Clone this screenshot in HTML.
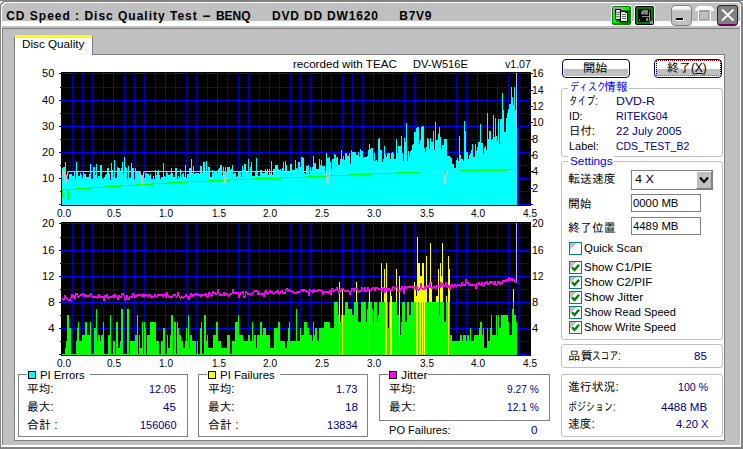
<!DOCTYPE html>
<html lang="ja">
<head>
<meta charset="utf-8">
<title>CD Speed : Disc Quality Test</title>
<style>
html,body{margin:0;padding:0;}
body{width:743px;height:449px;position:relative;overflow:hidden;background:#c0c0c0;
 font-family:"Liberation Sans","IPAGothic","Noto Sans CJK JP",sans-serif;font-size:12px;color:#000;}
.abs{position:absolute;}
.t{position:absolute;white-space:pre;line-height:14px;height:14px;font-size:11.5px;transform-origin:0 0;}
.tb,.tbs{font-weight:bold;font-size:12px;}
.j{font-size:12px;}
.v{color:#000080;}
.b{color:#0000ff;}
.box{position:absolute;box-sizing:border-box;}
.grp{position:absolute;box-sizing:border-box;border:1px solid #808080;}
.grpr{position:absolute;box-sizing:border-box;border:1px solid #c0c0c0;border-radius:3px;}
.gt{position:absolute;background:#fff;height:12px;}
.sq{position:absolute;width:6px;height:6px;border:1px solid #000;}
.edit{position:absolute;box-sizing:border-box;border:1px solid #808080;background:#fff;}
.cb{position:absolute;box-sizing:border-box;width:13px;height:13px;border:1px solid #008080;background:linear-gradient(135deg,#c0c0c0 0,#c0c0c0 28%,#fff 28%);}
.btn{position:absolute;box-sizing:border-box;border:1px solid #000080;border-radius:4px;background:linear-gradient(#fff 0,#fff 9px,#c0c0c0 9px,#c0c0c0 16px,#fff 16px);box-shadow:inset 0 0 0 1px #fff;}
</style>
</head>
<body>
<!-- window frame -->
<div class="box" style="left:0;top:0;width:743px;height:2px;background:#808080"></div>
<div class="box" style="left:0;top:0;width:1px;height:449px;background:#808080"></div>
<div class="box" style="left:1px;top:2px;width:740px;height:1px;background:#fff"></div>
<div class="box" style="left:1px;top:2px;width:1px;height:444px;background:#fff"></div>
<div class="box" style="left:740px;top:2px;width:1px;height:445px;background:#fff"></div>
<div class="box" style="left:741px;top:0;width:2px;height:449px;background:#808080"></div>
<div class="box" style="left:1px;top:445px;width:740px;height:2px;background:#fff"></div>
<div class="box" style="left:0;top:447px;width:743px;height:2px;background:#808080"></div>
<svg class="abs" style="left:0;top:0" width="7" height="7" viewBox="0 0 7 7"><polygon points="0,1 4,1 0,5" fill="#e8e8e8"/><path d="M4.5,1 L0.5,5" stroke="#808080" stroke-width="1.4"/><path d="M5.5,2.2 L1.8,6" stroke="#fff" stroke-width="1.2"/></svg>
<svg class="abs" style="left:736px;top:0" width="7" height="7" viewBox="0 0 7 7"><polygon points="7,1 3,1 7,5" fill="#c8c8c8"/><path d="M2.5,1 L6.5,5" stroke="#808080" stroke-width="1.4"/><path d="M1.5,2.2 L5.2,6" stroke="#fff" stroke-width="1.2"/></svg>
<!-- title bar -->
<div class="box" style="left:2px;top:21px;width:738px;height:5px;background:#fff"></div>
<div class="box" style="left:2px;top:28px;width:1px;height:417px;background:#808080"></div>
<div class="box" style="left:2px;top:28px;width:738px;height:1px;background:#808080"></div>
<!-- title icons -->
<svg class="abs" style="left:611px;top:5px" width="21" height="21" viewBox="-1 -1 21 21" shape-rendering="crispEdges">
 <rect x="-1" y="-1" width="21" height="21" rx="3" fill="#fff" shape-rendering="auto"/>
 <rect x="0" y="0" width="19" height="19" rx="2" fill="#008000" shape-rendering="auto"/>
 <polygon points="0.5,2 2,0.5 17,0.5 17,4 10,4 3.5,4 3.5,15.5 8,17 0.5,16.5" fill="#00ff00"/>
 <polygon points="1,1 11.5,1 10.5,3.5 3.5,3.5 3.5,8 1,8" fill="#a8a0a8"/>
 <rect x="3" y="3" width="6" height="11" fill="#000"/>
 <rect x="4" y="4" width="4" height="9" fill="#d8d8d8"/>
 <rect x="4" y="6" width="4" height="1" fill="#808080"/><rect x="4" y="8" width="4" height="1" fill="#808080"/><rect x="4" y="10" width="4" height="1" fill="#808080"/>
 <rect x="8" y="5" width="8" height="11" fill="#000"/>
 <rect x="9" y="6" width="6" height="9" fill="#e8e8e8"/>
 <rect x="13" y="5" width="3" height="2" fill="#000"/>
 <rect x="10" y="8" width="4" height="1" fill="#707070"/><rect x="10" y="10" width="4" height="1" fill="#707070"/><rect x="10" y="12" width="3" height="1" fill="#707070"/>
 <rect x="13" y="12" width="1" height="1" fill="#c000c0"/>
</svg>
<svg class="abs" style="left:634px;top:5px" width="21" height="21" viewBox="-1 -1 21 21" shape-rendering="crispEdges">
 <rect x="-1" y="-1" width="21" height="21" rx="3" fill="#fff" shape-rendering="auto"/>
 <rect x="0" y="0" width="19" height="19" rx="2" fill="#000" shape-rendering="auto"/>
 <rect x="1" y="1" width="17" height="17" rx="1" fill="#008000" shape-rendering="auto"/>
 <rect x="3" y="3" width="13" height="13" fill="#000"/>
 <polygon points="8,4 13,4 13,8.5 6,8.5 6,6" fill="#808080" shape-rendering="auto"/>
 <rect x="7" y="10" width="8" height="1" fill="#909090"/>
 <rect x="14" y="6" width="1" height="9" fill="#909090"/>
 <rect x="11" y="12" width="2" height="3" fill="#808080"/>
 <rect x="4" y="13" width="1" height="2" fill="#707070"/>
 <rect x="15" y="15" width="3" height="3" fill="#909090"/>
 <rect x="14" y="4" width="1" height="1" fill="#00a000"/>
</svg>
<!-- min / max / close -->
<div class="box" style="left:671px;top:5px;width:21px;height:21px;border:1px solid #808080;border-radius:4px;background:linear-gradient(#fff 0,#f0f0f0 3px,#c0c0c0 5px,#c0c0c0 100%);"></div>
<div class="box" style="left:676px;top:18px;width:8px;height:3px;background:#000;border-bottom:1px solid #fff;border-right:1px solid #fff"></div>
<div class="box" style="left:695px;top:6px;width:19px;height:5px;background:#fff;border-radius:5px 5px 0 0;"></div>
<div class="box" style="left:698px;top:9px;width:13px;height:13px;border:1px solid #fff;background:#c0c0c0;"></div>
<div class="box" style="left:699px;top:10px;width:10px;height:10px;border:1px solid #a0a0a0;border-top:2px solid #a0a0a0;"></div>
<div class="box" style="left:717px;top:5px;width:21px;height:21px;border:1px solid #800000;border-bottom:2px solid #700060;border-radius:4px;background:#808080;"></div>
<svg class="abs" style="left:717px;top:5px" width="21" height="21" viewBox="0 0 21 21"><path d="M5,4.5 L16.5,15.5 M16.5,4.5 L5,15.5" stroke="#fff" stroke-width="1.8" fill="none"/></svg>

<!-- tab page -->
<div class="box" style="left:14px;top:54px;width:711px;height:387px;background:#fff;border-left:1px solid #808080;border-top:1px solid #808080;border-right:1px solid #808080;border-bottom:1px solid #808080;"></div>
<div class="box" style="left:14px;top:35px;width:79px;height:20px;background:#fff;border-left:1px solid #808080;border-right:1px solid #808080;border-top:3px solid #ffff00;border-radius:2px 2px 0 0;"></div>

<svg class="abs" style="left:0;top:0" width="743" height="449" viewBox="0 0 743 449" shape-rendering="crispEdges"><rect x="61" y="72" width="470" height="134" fill="#000"/><rect x="72" y="73" width="1" height="133" fill="#0000b8"/><rect x="82" y="73" width="1" height="133" fill="#0000b8"/><rect x="92" y="73" width="1" height="133" fill="#0000b8"/><rect x="103" y="73" width="1" height="133" fill="#0000b8"/><rect x="113" y="73" width="1" height="133" fill="#0000ff"/><rect x="124" y="73" width="1" height="133" fill="#0000b8"/><rect x="134" y="73" width="1" height="133" fill="#0000b8"/><rect x="144" y="73" width="1" height="133" fill="#0000b8"/><rect x="155" y="73" width="1" height="133" fill="#0000b8"/><rect x="165" y="73" width="1" height="133" fill="#0000ff"/><rect x="175" y="73" width="1" height="133" fill="#0000b8"/><rect x="186" y="73" width="1" height="133" fill="#0000b8"/><rect x="196" y="73" width="1" height="133" fill="#0000b8"/><rect x="207" y="73" width="1" height="133" fill="#0000b8"/><rect x="217" y="73" width="1" height="133" fill="#0000ff"/><rect x="227" y="73" width="1" height="133" fill="#0000b8"/><rect x="238" y="73" width="1" height="133" fill="#0000b8"/><rect x="248" y="73" width="1" height="133" fill="#0000b8"/><rect x="259" y="73" width="1" height="133" fill="#0000b8"/><rect x="269" y="73" width="1" height="133" fill="#0000ff"/><rect x="279" y="73" width="1" height="133" fill="#0000b8"/><rect x="290" y="73" width="1" height="133" fill="#0000b8"/><rect x="300" y="73" width="1" height="133" fill="#0000b8"/><rect x="310" y="73" width="1" height="133" fill="#0000b8"/><rect x="321" y="73" width="1" height="133" fill="#0000ff"/><rect x="331" y="73" width="1" height="133" fill="#0000b8"/><rect x="342" y="73" width="1" height="133" fill="#0000b8"/><rect x="352" y="73" width="1" height="133" fill="#0000b8"/><rect x="362" y="73" width="1" height="133" fill="#0000b8"/><rect x="373" y="73" width="1" height="133" fill="#0000ff"/><rect x="383" y="73" width="1" height="133" fill="#0000b8"/><rect x="393" y="73" width="1" height="133" fill="#0000b8"/><rect x="404" y="73" width="1" height="133" fill="#0000b8"/><rect x="414" y="73" width="1" height="133" fill="#0000b8"/><rect x="425" y="73" width="1" height="133" fill="#0000ff"/><rect x="435" y="73" width="1" height="133" fill="#0000b8"/><rect x="445" y="73" width="1" height="133" fill="#0000b8"/><rect x="456" y="73" width="1" height="133" fill="#0000b8"/><rect x="466" y="73" width="1" height="133" fill="#0000b8"/><rect x="477" y="73" width="1" height="133" fill="#0000ff"/><rect x="487" y="73" width="1" height="133" fill="#0000b8"/><rect x="497" y="73" width="1" height="133" fill="#0000b8"/><rect x="508" y="73" width="1" height="133" fill="#0000b8"/><rect x="518" y="73" width="1" height="133" fill="#0000b8"/><rect x="59" y="73" width="474" height="1" fill="#0000ff"/><rect x="60" y="87" width="469" height="1" fill="#0000c8"/><rect x="59" y="100" width="470" height="1" fill="#0000ff"/><rect x="60" y="113" width="469" height="1" fill="#0000c8"/><rect x="59" y="126" width="470" height="1" fill="#0000ff"/><rect x="60" y="139" width="469" height="1" fill="#0000c8"/><rect x="59" y="152" width="470" height="1" fill="#0000ff"/><rect x="60" y="165" width="469" height="1" fill="#0000c8"/><rect x="59" y="178" width="470" height="1" fill="#0000ff"/><rect x="60" y="191" width="469" height="1" fill="#0000c8"/><rect x="59" y="204" width="470" height="1" fill="#0000ff"/><rect x="529" y="204" width="4" height="1" fill="#0000ff"/><rect x="529" y="196" width="2" height="1" fill="#0000ff"/><rect x="529" y="188" width="4" height="1" fill="#0000ff"/><rect x="529" y="180" width="2" height="1" fill="#0000ff"/><rect x="529" y="171" width="4" height="1" fill="#0000ff"/><rect x="529" y="163" width="2" height="1" fill="#0000ff"/><rect x="529" y="155" width="4" height="1" fill="#0000ff"/><rect x="529" y="147" width="2" height="1" fill="#0000ff"/><rect x="529" y="139" width="4" height="1" fill="#0000ff"/><rect x="529" y="131" width="2" height="1" fill="#0000ff"/><rect x="529" y="122" width="4" height="1" fill="#0000ff"/><rect x="529" y="114" width="2" height="1" fill="#0000ff"/><rect x="529" y="106" width="4" height="1" fill="#0000ff"/><rect x="529" y="98" width="2" height="1" fill="#0000ff"/><rect x="529" y="90" width="4" height="1" fill="#0000ff"/><rect x="529" y="82" width="2" height="1" fill="#0000ff"/><path d="M62,205V168h1V167h1V167h1V162h1V175h1V179h1V179h1V174h1V174h1V174h1V176h1V176h1V171h1V179h1V162h1V171h1V176h1V176h1V173h1V175h1V178h1V172h1V174h1V174h1V177h1V177h1V177h1V174h1V164h1V179h1V179h1V167h1V167h1V175h1V164h1V178h1V176h1V176h1V165h1V165h1V178h1V179h1V177h1V175h1V174h1V168h1V168h1V174h1V180h1V163h1V170h1V177h1V160h1V178h1V178h1V167h1V168h1V168h1V171h1V168h1V162h1V174h1V157h1V167h1V168h1V179h1V166h1V178h1V178h1V163h1V168h1V168h1V179h1V168h1V172h1V172h1V171h1V172h1V175h1V175h1V175h1V175h1V178h1V173h1V173h1V174h1V174h1V176h1V174h1V179h1V179h1V176h1V179h1V170h1V175h1V171h1V170h1V175h1V179h1V177h1V177h1V163h1V176h1V177h1V172h1V173h1V175h1V175h1V174h1V168h1V173h1V177h1V177h1V168h1V168h1V179h1V176h1V178h1V169h1V177h1V174h1V173h1V177h1V165h1V178h1V174h1V174h1V168h1V168h1V159h1V173h1V166h1V174h1V173h1V173h1V173h1V173h1V174h1V166h1V166h1V173h1V162h1V162h1V172h1V161h1V172h1V167h1V167h1V177h1V177h1V170h1V173h1V171h1V171h1V171h1V173h1V169h1V168h1V165h1V165h1V175h1V167h1V171h1V167h1V176h1V167h1V167h1V167h1V170h1V169h1V165h1V174h1V173h1V173h1V177h1V176h1V172h1V171h1V171h1V177h1V166h1V170h1V164h1V164h1V171h1V171h1V159h1V173h1V167h1V162h1V176h1V176h1V176h1V172h1V158h1V171h1V176h1V176h1V170h1V170h1V173h1V173h1V173h1V169h1V172h1V169h1V175h1V169h1V173h1V161h1V175h1V169h1V169h1V165h1V165h1V165h1V169h1V170h1V169h1V171h1V168h1V162h1V172h1V161h1V165h1V171h1V171h1V171h1V164h1V164h1V170h1V170h1V170h1V160h1V168h1V169h1V162h1V162h1V167h1V157h1V157h1V158h1V173h1V174h1V166h1V166h1V165h1V174h1V167h1V171h1V167h1V156h1V163h1V163h1V169h1V169h1V169h1V159h1V165h1V160h1V166h1V166h1V166h1V173h1V153h1V158h1V158h1V157h1V162h1V169h1V159h1V159h1V154h1V155h1V158h1V157h1V165h1V165h1V159h1V150h1V159h1V156h1V160h1V153h1V153h1V156h1V156h1V153h1V164h1V150h1V152h1V152h1V152h1V152h1V155h1V155h1V152h1V157h1V149h1V151h1V151h1V158h1V157h1V157h1V157h1V156h1V150h1V144h1V149h1V148h1V148h1V161h1V153h1V161h1V160h1V162h1V139h1V138h1V150h1V150h1V162h1V159h1V146h1V154h1V157h1V153h1V153h1V153h1V159h1V153h1V152h1V153h1V159h1V159h1V139h1V153h1V146h1V146h1V146h1V136h1V153h1V161h1V138h1V142h1V123h1V161h1V151h1V156h1V151h1V150h1V145h1V144h1V132h1V132h1V128h1V127h1V127h1V144h1V140h1V127h1V126h1V126h1V148h1V152h1V147h1V138h1V139h1V149h1V138h1V142h1V142h1V131h1V150h1V122h1V140h1V140h1V134h1V127h1V137h1V149h1V145h1V145h1V139h1V139h1V139h1V156h1V156h1V156h1V157h1V158h1V164h1V164h1V168h1V168h1V160h1V158h1V161h1V136h1V155h1V159h1V159h1V161h1V121h1V131h1V152h1V152h1V159h1V155h1V153h1V150h1V144h1V157h1V157h1V144h1V151h1V147h1V142h1V142h1V124h1V143h1V143h1V154h1V148h1V146h1V150h1V113h1V139h1V131h1V131h1V140h1V139h1V115h1V137h1V118h1V136h1V141h1V119h1V144h1V119h1V119h1V93h1V110h1V132h1V132h1V118h1V113h1V109h1V104h1V104h1V87h1V97h1V105h1V87h1V110h1V126h1V205Z" fill="#00ffff"/><path d="M62,197.5 L63,190.5 L64,189.5 L65,189.5 L66,189.5 L67,189.5 L68,200.5 L69,189.5 L70,189.5 L71,189.5 L72,189.5 L73,189.5 L74,189.5 L75,189.5 L76,189.5 L77,188.5 L78,188.5 L79,188.5 L80,188.5 L81,188.5 L82,188.5 L83,188.5 L84,188.5 L85,188.5 L86,188.5 L87,188.5 L88,188.5 L89,188.5 L90,188.5 L91,187.5 L92,187.5 L93,187.5 L94,187.5 L95,187.5 L96,187.5 L97,187.5 L98,187.5 L99,187.5 L100,187.5 L101,187.5 L102,187.5 L103,187.5 L104,187.5 L105,187.5 L106,186.5 L107,186.5 L108,186.5 L109,186.5 L110,186.5 L111,186.5 L112,186.5 L113,186.5 L114,186.5 L115,186.5 L116,186.5 L117,186.5 L118,186.5 L119,186.5 L120,186.5 L121,185.5 L122,185.5 L123,185.5 L124,185.5 L125,185.5 L126,185.5 L127,185.5 L128,185.5 L129,185.5 L130,185.5 L131,185.5 L132,185.5 L133,185.5 L134,185.5 L135,185.5 L136,185.5 L137,184.5 L138,184.5 L139,184.5 L140,184.5 L141,184.5 L142,184.5 L143,184.5 L144,184.5 L145,184.5 L146,184.5 L147,184.5 L148,184.5 L149,184.5 L150,184.5 L151,184.5 L152,184.5 L153,183.5 L154,183.5 L155,183.5 L156,183.5 L157,183.5 L158,183.5 L159,183.5 L160,183.5 L161,183.5 L162,183.5 L163,183.5 L164,183.5 L165,183.5 L166,183.5 L167,183.5 L168,183.5 L169,182.5 L170,182.5 L171,182.5 L172,182.5 L173,182.5 L174,182.5 L175,182.5 L176,182.5 L177,182.5 L178,182.5 L179,182.5 L180,182.5 L181,182.5 L182,182.5 L183,182.5 L184,182.5 L185,182.5 L186,182.5 L187,181.5 L188,181.5 L189,181.5 L190,181.5 L191,181.5 L192,181.5 L193,181.5 L194,181.5 L195,181.5 L196,181.5 L197,181.5 L198,181.5 L199,181.5 L200,181.5 L201,181.5 L202,181.5 L203,181.5 L204,181.5 L205,181.5 L206,181.5 L207,181.5 L208,180.5 L209,180.5 L210,180.5 L211,180.5 L212,180.5 L213,180.5 L214,180.5 L215,180.5 L216,180.5 L217,180.5 L218,180.5 L219,180.5 L220,180.5 L221,180.5 L222,180.5 L223,180.5 L224,180.5 L225,180.5 L226,180.5 L227,180.5 L228,180.5 L229,180.5 L230,179.5 L231,179.5 L232,179.5 L233,179.5 L234,179.5 L235,179.5 L236,179.5 L237,179.5 L238,179.5 L239,179.5 L240,179.5 L241,179.5 L242,179.5 L243,179.5 L244,179.5 L245,179.5 L246,179.5 L247,179.5 L248,179.5 L249,179.5 L250,179.5 L251,179.5 L252,179.5 L253,179.5 L254,178.5 L255,178.5 L256,178.5 L257,178.5 L258,178.5 L259,178.5 L260,178.5 L261,178.5 L262,178.5 L263,178.5 L264,178.5 L265,178.5 L266,178.5 L267,178.5 L268,178.5 L269,178.5 L270,178.5 L271,178.5 L272,178.5 L273,178.5 L274,178.5 L275,178.5 L276,178.5 L277,178.5 L278,178.5 L279,178.5 L280,178.5 L281,177.5 L282,177.5 L283,177.5 L284,177.5 L285,177.5 L286,177.5 L287,177.5 L288,177.5 L289,177.5 L290,177.5 L291,177.5 L292,177.5 L293,177.5 L294,177.5 L295,177.5 L296,177.5 L297,177.5 L298,177.5 L299,177.5 L300,177.5 L301,177.5 L302,177.5 L303,177.5 L304,177.5 L305,177.5 L306,177.5 L307,176.5 L308,176.5 L309,176.5 L310,176.5 L311,176.5 L312,176.5 L313,176.5 L314,176.5 L315,176.5 L316,176.5 L317,176.5 L318,176.5 L319,176.5 L320,176.5 L321,176.5 L322,176.5 L323,176.5 L324,176.5 L325,176.5 L326,176.5 L327,176.5 L328,175.5 L329,175.5 L330,175.5 L331,175.5 L332,175.5 L333,175.5 L334,175.5 L335,175.5 L336,175.5 L337,175.5 L338,175.5 L339,175.5 L340,175.5 L341,175.5 L342,175.5 L343,175.5 L344,175.5 L345,175.5 L346,175.5 L347,175.5 L348,175.5 L349,175.5 L350,174.5 L351,174.5 L352,174.5 L353,174.5 L354,174.5 L355,174.5 L356,174.5 L357,174.5 L358,174.5 L359,174.5 L360,174.5 L361,174.5 L362,174.5 L363,174.5 L364,174.5 L365,174.5 L366,174.5 L367,174.5 L368,174.5 L369,174.5 L370,174.5 L371,174.5 L372,173.5 L373,173.5 L374,173.5 L375,173.5 L376,173.5 L377,173.5 L378,173.5 L379,173.5 L380,173.5 L381,173.5 L382,173.5 L383,173.5 L384,173.5 L385,173.5 L386,173.5 L387,173.5 L388,173.5 L389,173.5 L390,173.5 L391,173.5 L392,173.5 L393,173.5 L394,173.5 L395,173.5 L396,172.5 L397,172.5 L398,172.5 L399,172.5 L400,172.5 L401,172.5 L402,172.5 L403,172.5 L404,172.5 L405,172.5 L406,172.5 L407,172.5 L408,172.5 L409,172.5 L410,172.5 L411,172.5 L412,172.5 L413,172.5 L414,172.5 L415,172.5 L416,172.5 L417,172.5 L418,172.5 L419,172.5 L420,171.5 L421,171.5 L422,171.5 L423,171.5 L424,171.5 L425,171.5 L426,171.5 L427,171.5 L428,171.5 L429,171.5 L430,171.5 L431,171.5 L432,171.5 L433,171.5 L434,171.5 L435,171.5 L436,171.5 L437,171.5 L438,171.5 L439,171.5 L440,171.5 L441,171.5 L442,171.5 L443,171.5 L444,171.5 L445,171.5 L446,171.5 L447,171.5 L448,171.5 L449,171.5 L450,171.5 L451,171.5 L452,171.5 L453,171.5 L454,171.5 L455,171.5 L456,171.5 L457,171.5 L458,171.5 L459,171.5 L460,171.5 L461,170.5 L462,170.5 L463,170.5 L464,170.5 L465,170.5 L466,170.5 L467,170.5 L468,170.5 L469,170.5 L470,170.5 L471,170.5 L472,170.5 L473,170.5 L474,170.5 L475,170.5 L476,170.5 L477,170.5 L478,170.5 L479,170.5 L480,170.5 L481,170.5 L482,170.5 L483,170.5 L484,170.5 L485,170.5 L486,170.5 L487,170.5 L488,170.5 L489,170.5 L490,170.5 L491,170.5 L492,170.5 L493,170.5 L494,170.5 L495,170.5 L496,170.5 L497,170.5 L498,170.5 L499,170.5 L500,170.5 L501,170.5 L502,170.5 L503,170.5 L504,170.5 L505,170.5 L506,170.5 L507,169.5 L508,169.5 L509,169.5 L510,169.5 L511,169.5 L512,169.5 L513,169.5 L514,169.5 L515,169.5 L516,169.5" fill="none" stroke="#00ff00" stroke-width="1" shape-rendering="crispEdges"/><path d="M62,177 L63,171.5 L64,171.5 L65,180 L66,184 L67,176 L68,171.5 L140,171.5 L141,178 L142,184.5 L143,177 L144,171.5 L223,171.5 L224,178 L225,184.5 L226,177 L227,171.5 L326,171.5 L327,178 L328,184.5 L329,177 L330,171.5 L443,171.5 L444,178 L445,184.5 L446,177 L447,171.5 L513,171.5" fill="none" stroke="#c8c8c8" stroke-width="1.2" shape-rendering="auto"/><rect x="516" y="73" width="1" height="54" fill="#c0c0c0"/><rect x="61" y="222" width="470" height="134" fill="#000"/><rect x="72" y="223" width="1" height="133" fill="#0000b8"/><rect x="82" y="223" width="1" height="133" fill="#0000b8"/><rect x="92" y="223" width="1" height="133" fill="#0000b8"/><rect x="103" y="223" width="1" height="133" fill="#0000b8"/><rect x="113" y="223" width="1" height="133" fill="#0000ff"/><rect x="124" y="223" width="1" height="133" fill="#0000b8"/><rect x="134" y="223" width="1" height="133" fill="#0000b8"/><rect x="144" y="223" width="1" height="133" fill="#0000b8"/><rect x="155" y="223" width="1" height="133" fill="#0000b8"/><rect x="165" y="223" width="1" height="133" fill="#0000ff"/><rect x="175" y="223" width="1" height="133" fill="#0000b8"/><rect x="186" y="223" width="1" height="133" fill="#0000b8"/><rect x="196" y="223" width="1" height="133" fill="#0000b8"/><rect x="207" y="223" width="1" height="133" fill="#0000b8"/><rect x="217" y="223" width="1" height="133" fill="#0000ff"/><rect x="227" y="223" width="1" height="133" fill="#0000b8"/><rect x="238" y="223" width="1" height="133" fill="#0000b8"/><rect x="248" y="223" width="1" height="133" fill="#0000b8"/><rect x="259" y="223" width="1" height="133" fill="#0000b8"/><rect x="269" y="223" width="1" height="133" fill="#0000ff"/><rect x="279" y="223" width="1" height="133" fill="#0000b8"/><rect x="290" y="223" width="1" height="133" fill="#0000b8"/><rect x="300" y="223" width="1" height="133" fill="#0000b8"/><rect x="310" y="223" width="1" height="133" fill="#0000b8"/><rect x="321" y="223" width="1" height="133" fill="#0000ff"/><rect x="331" y="223" width="1" height="133" fill="#0000b8"/><rect x="342" y="223" width="1" height="133" fill="#0000b8"/><rect x="352" y="223" width="1" height="133" fill="#0000b8"/><rect x="362" y="223" width="1" height="133" fill="#0000b8"/><rect x="373" y="223" width="1" height="133" fill="#0000ff"/><rect x="383" y="223" width="1" height="133" fill="#0000b8"/><rect x="393" y="223" width="1" height="133" fill="#0000b8"/><rect x="404" y="223" width="1" height="133" fill="#0000b8"/><rect x="414" y="223" width="1" height="133" fill="#0000b8"/><rect x="425" y="223" width="1" height="133" fill="#0000ff"/><rect x="435" y="223" width="1" height="133" fill="#0000b8"/><rect x="445" y="223" width="1" height="133" fill="#0000b8"/><rect x="456" y="223" width="1" height="133" fill="#0000b8"/><rect x="466" y="223" width="1" height="133" fill="#0000b8"/><rect x="477" y="223" width="1" height="133" fill="#0000ff"/><rect x="487" y="223" width="1" height="133" fill="#0000b8"/><rect x="497" y="223" width="1" height="133" fill="#0000b8"/><rect x="508" y="223" width="1" height="133" fill="#0000b8"/><rect x="518" y="223" width="1" height="133" fill="#0000b8"/><rect x="59" y="223" width="470" height="1" fill="#0000ff"/><rect x="60" y="237" width="469" height="1" fill="#0000c8"/><rect x="59" y="250" width="470" height="1" fill="#0000ff"/><rect x="60" y="263" width="469" height="1" fill="#0000c8"/><rect x="59" y="276" width="470" height="1" fill="#0000ff"/><rect x="60" y="289" width="469" height="1" fill="#0000c8"/><rect x="59" y="302" width="470" height="1" fill="#0000ff"/><rect x="60" y="315" width="469" height="1" fill="#0000c8"/><rect x="59" y="328" width="470" height="1" fill="#0000ff"/><rect x="60" y="341" width="469" height="1" fill="#0000c8"/><rect x="59" y="354" width="470" height="1" fill="#0000ff"/><path d="M62,355V354h1V354h1V354h1V348h1V341h1V315h1V315h1V328h1V328h1V354h1V354h1V354h1V354h1V354h1V341h1V328h1V322h1V341h1V341h1V341h1V335h1V335h1V335h1V322h1V322h1V335h1V335h1V335h1V322h1V354h1V354h1V354h1V328h1V328h1V309h1V341h1V335h1V335h1V341h1V335h1V335h1V322h1V354h1V354h1V354h1V354h1V335h1V335h1V315h1V354h1V354h1V341h1V341h1V354h1V322h1V322h1V348h1V348h1V341h1V309h1V309h1V354h1V354h1V354h1V354h1V309h1V309h1V354h1V341h1V341h1V341h1V341h1V341h1V335h1V335h1V315h1V354h1V335h1V348h1V348h1V322h1V354h1V322h1V328h1V354h1V335h1V335h1V335h1V322h1V322h1V322h1V322h1V322h1V322h1V341h1V341h1V341h1V354h1V354h1V341h1V341h1V328h1V328h1V354h1V354h1V335h1V348h1V348h1V335h1V315h1V315h1V354h1V322h1V322h1V354h1V322h1V328h1V335h1V335h1V341h1V341h1V348h1V348h1V341h1V328h1V341h1V315h1V348h1V335h1V335h1V341h1V341h1V341h1V341h1V354h1V341h1V354h1V354h1V328h1V322h1V354h1V354h1V315h1V315h1V341h1V335h1V348h1V348h1V348h1V348h1V348h1V335h1V335h1V335h1V322h1V322h1V341h1V341h1V341h1V348h1V348h1V348h1V348h1V348h1V348h1V335h1V335h1V335h1V354h1V354h1V341h1V341h1V341h1V322h1V322h1V322h1V315h1V335h1V335h1V335h1V335h1V341h1V341h1V341h1V341h1V341h1V335h1V335h1V341h1V341h1V322h1V341h1V335h1V335h1V348h1V335h1V335h1V335h1V322h1V322h1V335h1V328h1V328h1V328h1V335h1V335h1V335h1V335h1V348h1V348h1V348h1V348h1V328h1V328h1V328h1V328h1V322h1V322h1V341h1V341h1V341h1V341h1V341h1V348h1V348h1V341h1V328h1V322h1V341h1V341h1V341h1V341h1V341h1V341h1V309h1V341h1V341h1V341h1V328h1V335h1V335h1V335h1V322h1V322h1V322h1V328h1V328h1V335h1V335h1V335h1V341h1V322h1V335h1V328h1V328h1V341h1V341h1V328h1V328h1V328h1V328h1V328h1V322h1V322h1V322h1V322h1V322h1V322h1V328h1V328h1V328h1V328h1V302h1V302h1V302h1V302h1V315h1V302h1V322h1V315h1V302h1V315h1V315h1V302h1V302h1V302h1V309h1V309h1V309h1V309h1V315h1V315h1V302h1V302h1V302h1V302h1V322h1V322h1V322h1V302h1V302h1V302h1V302h1V302h1V322h1V309h1V302h1V302h1V302h1V302h1V309h1V322h1V302h1V302h1V302h1V322h1V315h1V302h1V302h1V302h1V302h1V302h1V302h1V302h1V302h1V302h1V328h1V302h1V302h1V302h1V302h1V302h1V302h1V302h1V302h1V315h1V315h1V302h1V335h1V322h1V302h1V302h1V302h1V322h1V322h1V302h1V302h1V315h1V315h1V302h1V302h1V302h1V302h1V302h1V302h1V302h1V302h1V302h1V302h1V302h1V302h1V302h1V302h1V302h1V302h1V302h1V302h1V302h1V302h1V302h1V302h1V302h1V302h1V302h1V302h1V302h1V302h1V315h1V302h1V302h1V302h1V302h1V322h1V322h1V302h1V302h1V302h1V302h1V335h1V335h1V341h1V341h1V341h1V341h1V341h1V341h1V341h1V341h1V335h1V335h1V341h1V335h1V335h1V335h1V341h1V335h1V335h1V341h1V328h1V341h1V341h1V341h1V335h1V335h1V335h1V335h1V335h1V328h1V322h1V322h1V335h1V328h1V348h1V348h1V348h1V328h1V341h1V341h1V328h1V315h1V335h1V335h1V335h1V335h1V315h1V335h1V315h1V328h1V328h1V315h1V315h1V315h1V315h1V315h1V315h1V315h1V322h1V335h1V335h1V335h1V309h1V302h1V315h1V315h1V322h1V355Z" fill="#00ff00"/><path d="M339,355V282h1V355ZM342,355V289h1V355ZM356,302V282h1V302ZM369,355V289h1V355ZM381,302V263h1V302ZM384,302V269h1V302ZM385,355V289h1V355ZM386,355V263h1V355ZM390,355V289h1V355ZM391,355V296h1V355ZM396,302V269h1V302ZM399,355V276h1V355ZM414,302V282h1V302ZM415,302V289h1V302ZM416,355V296h1V355ZM417,355V237h1V355ZM418,302V263h1V302ZM419,355V263h1V355ZM420,355V276h1V355ZM421,302V276h1V302ZM422,355V263h1V355ZM423,302V263h1V302ZM424,355V289h1V355ZM425,302V289h1V302ZM426,302V256h1V302ZM429,302V282h1V302ZM430,302V243h1V302ZM431,302V282h1V302ZM436,302V296h1V302ZM437,302V296h1V302ZM438,302V269h1V302ZM440,302V263h1V302ZM441,302V276h1V302ZM442,302V243h1V302ZM446,302V296h1V302ZM448,355V256h1V355ZM449,302V269h1V302ZM513,302V289h1V302Z" fill="#ffff00"/><path d="M62,298v2h1v-2zM63,299v2h1v-2zM64,295v5h1v-5zM65,295v3h1v-3zM66,297v2h1v-2zM67,298v2h1v-2zM68,299v2h1v-2zM69,299v2h1v-2zM70,297v4h1v-4zM71,294v4h1v-4zM72,294v4h1v-4zM73,295v3h1v-3zM74,295v4h1v-4zM75,293v6h1v-6zM76,293v2h1v-2zM77,293v4h1v-4zM78,296v2h1v-2zM79,295v2h1v-2zM80,294v2h1v-2zM81,294v2h1v-2zM82,293v2h1v-2zM83,293v4h1v-4zM84,294v3h1v-3zM85,294v2h1v-2zM86,295v2h1v-2zM87,295v2h1v-2zM88,295v2h1v-2zM89,294v3h1v-3zM90,293v2h1v-2zM91,293v4h1v-4zM92,296v2h1v-2zM93,296v2h1v-2zM94,296v2h1v-2zM95,296v2h1v-2zM96,296v2h1v-2zM97,297v2h1v-2zM98,294v4h1v-4zM99,294v3h1v-3zM100,296v2h1v-2zM101,296v2h1v-2zM102,296v2h1v-2zM103,296v5h1v-5zM104,295v6h1v-6zM105,295v2h1v-2zM106,294v3h1v-3zM107,294v4h1v-4zM108,297v2h1v-2zM109,296v2h1v-2zM110,296v2h1v-2zM111,296v2h1v-2zM112,295v2h1v-2zM113,295v3h1v-3zM114,294v4h1v-4zM115,294v2h1v-2zM116,295v3h1v-3zM117,297v3h1v-3zM118,295v5h1v-5zM119,295v2h1v-2zM120,296v2h1v-2zM121,293v5h1v-5zM122,293v2h1v-2zM123,293v3h1v-3zM124,295v5h1v-5zM125,299v2h1v-2zM126,295v5h1v-5zM127,295v4h1v-4zM128,298v2h1v-2zM129,296v4h1v-4zM130,296v2h1v-2zM131,296v2h1v-2zM132,293v5h1v-5zM133,293v2h1v-2zM134,294v4h1v-4zM135,295v3h1v-3zM136,295v2h1v-2zM137,294v3h1v-3zM138,294v2h1v-2zM139,294v2h1v-2zM140,294v2h1v-2zM141,294v3h1v-3zM142,294v3h1v-3zM143,294v3h1v-3zM144,294v3h1v-3zM145,294v2h1v-2zM146,294v2h1v-2zM147,294v3h1v-3zM148,295v2h1v-2zM149,294v2h1v-2zM150,294v4h1v-4zM151,296v2h1v-2zM152,296v2h1v-2zM153,296v2h1v-2zM154,294v3h1v-3zM155,294v3h1v-3zM156,296v2h1v-2zM157,294v3h1v-3zM158,294v2h1v-2zM159,294v2h1v-2zM160,294v2h1v-2zM161,294v2h1v-2zM162,294v3h1v-3zM163,294v3h1v-3zM164,294v2h1v-2zM165,294v4h1v-4zM166,292v6h1v-6zM167,292v4h1v-4zM168,295v2h1v-2zM169,296v2h1v-2zM170,296v2h1v-2zM171,296v2h1v-2zM172,295v3h1v-3zM173,294v2h1v-2zM174,294v2h1v-2zM175,294v3h1v-3zM176,296v2h1v-2zM177,292v5h1v-5zM178,292v4h1v-4zM179,295v3h1v-3zM180,297v2h1v-2zM181,296v2h1v-2zM182,296v2h1v-2zM183,297v2h1v-2zM184,296v2h1v-2zM185,294v3h1v-3zM186,294v3h1v-3zM187,296v2h1v-2zM188,296v4h1v-4zM189,296v4h1v-4zM190,293v4h1v-4zM191,293v4h1v-4zM192,294v3h1v-3zM193,294v2h1v-2zM194,294v2h1v-2zM195,293v2h1v-2zM196,293v2h1v-2zM197,293v3h1v-3zM198,294v2h1v-2zM199,294v2h1v-2zM200,294v3h1v-3zM201,294v3h1v-3zM202,294v2h1v-2zM203,294v2h1v-2zM204,294v2h1v-2zM205,293v2h1v-2zM206,293v4h1v-4zM207,296v2h1v-2zM208,292v5h1v-5zM209,292v2h1v-2zM210,293v3h1v-3zM211,295v2h1v-2zM212,291v5h1v-5zM213,291v3h1v-3zM214,292v2h1v-2zM215,292v3h1v-3zM216,293v2h1v-2zM217,289v5h1v-5zM218,289v5h1v-5zM219,293v3h1v-3zM220,294v2h1v-2zM221,294v2h1v-2zM222,294v2h1v-2zM223,292v3h1v-3zM224,292v4h1v-4zM225,293v3h1v-3zM226,293v2h1v-2zM227,293v3h1v-3zM228,295v2h1v-2zM229,294v2h1v-2zM230,293v2h1v-2zM231,293v2h1v-2zM232,289v5h1v-5zM233,289v5h1v-5zM234,292v2h1v-2zM235,292v2h1v-2zM236,292v2h1v-2zM237,292v2h1v-2zM238,292v6h1v-6zM239,294v4h1v-4zM240,292v3h1v-3zM241,292v2h1v-2zM242,291v2h1v-2zM243,291v7h1v-7zM244,296v2h1v-2zM245,291v6h1v-6zM246,291v2h1v-2zM247,292v3h1v-3zM248,293v2h1v-2zM249,293v2h1v-2zM250,293v2h1v-2zM251,294v2h1v-2zM252,292v3h1v-3zM253,291v2h1v-2zM254,290v2h1v-2zM255,290v2h1v-2zM256,290v2h1v-2zM257,290v5h1v-5zM258,291v4h1v-4zM259,291v3h1v-3zM260,293v2h1v-2zM261,293v2h1v-2zM262,293v2h1v-2zM263,293v4h1v-4zM264,291v6h1v-6zM265,290v2h1v-2zM266,290v4h1v-4zM267,293v2h1v-2zM268,292v2h1v-2zM269,290v3h1v-3zM270,290v3h1v-3zM271,291v2h1v-2zM272,291v3h1v-3zM273,293v2h1v-2zM274,292v2h1v-2zM275,291v2h1v-2zM276,291v2h1v-2zM277,290v3h1v-3zM278,290v4h1v-4zM279,293v2h1v-2zM280,291v3h1v-3zM281,290v2h1v-2zM282,290v4h1v-4zM283,292v2h1v-2zM284,292v2h1v-2zM285,289v5h1v-5zM286,288v2h1v-2zM287,288v4h1v-4zM288,289v3h1v-3zM289,289v2h1v-2zM290,290v2h1v-2zM291,290v2h1v-2zM292,291v2h1v-2zM293,291v2h1v-2zM294,292v2h1v-2zM295,292v2h1v-2zM296,292v2h1v-2zM297,291v2h1v-2zM298,291v2h1v-2zM299,291v2h1v-2zM300,290v2h1v-2zM301,289v2h1v-2zM302,289v3h1v-3zM303,289v3h1v-3zM304,289v2h1v-2zM305,290v2h1v-2zM306,290v2h1v-2zM307,291v2h1v-2zM308,291v5h1v-5zM309,289v7h1v-7zM310,289v2h1v-2zM311,290v2h1v-2zM312,290v3h1v-3zM313,289v4h1v-4zM314,289v3h1v-3zM315,290v2h1v-2zM316,290v2h1v-2zM317,290v2h1v-2zM318,289v2h1v-2zM319,289v2h1v-2zM320,289v2h1v-2zM321,290v2h1v-2zM322,290v5h1v-5zM323,291v4h1v-4zM324,291v2h1v-2zM325,291v2h1v-2zM326,291v2h1v-2zM327,291v2h1v-2zM328,291v3h1v-3zM329,290v4h1v-4zM330,290v5h1v-5zM331,288v7h1v-7zM332,288v3h1v-3zM333,290v2h1v-2zM334,290v2h1v-2zM335,289v2h1v-2zM336,287v3h1v-3zM337,287v4h1v-4zM338,290v4h1v-4zM339,289v5h1v-5zM340,289v3h1v-3zM341,288v4h1v-4zM342,288v2h1v-2zM343,288v3h1v-3zM344,290v2h1v-2zM345,290v2h1v-2zM346,290v2h1v-2zM347,290v2h1v-2zM348,290v2h1v-2zM349,291v4h1v-4zM350,291v4h1v-4zM351,288v4h1v-4zM352,288v2h1v-2zM353,288v4h1v-4zM354,288v4h1v-4zM355,288v2h1v-2zM356,288v2h1v-2zM357,289v3h1v-3zM358,291v2h1v-2zM359,290v2h1v-2zM360,290v2h1v-2zM361,287v5h1v-5zM362,287v3h1v-3zM363,289v3h1v-3zM364,287v5h1v-5zM365,287v5h1v-5zM366,290v2h1v-2zM367,287v4h1v-4zM368,287v4h1v-4zM369,289v2h1v-2zM370,289v2h1v-2zM371,288v3h1v-3zM372,287v2h1v-2zM373,287v2h1v-2zM374,288v3h1v-3zM375,287v4h1v-4zM376,287v2h1v-2zM377,287v2h1v-2zM378,288v2h1v-2zM379,288v2h1v-2zM380,288v2h1v-2zM381,288v4h1v-4zM382,287v5h1v-5zM383,287v2h1v-2zM384,288v5h1v-5zM385,290v3h1v-3zM386,288v3h1v-3zM387,288v3h1v-3zM388,288v3h1v-3zM389,288v2h1v-2zM390,289v2h1v-2zM391,289v2h1v-2zM392,286v5h1v-5zM393,286v2h1v-2zM394,287v2h1v-2zM395,287v2h1v-2zM396,286v2h1v-2zM397,286v5h1v-5zM398,290v2h1v-2zM399,290v2h1v-2zM400,288v3h1v-3zM401,286v3h1v-3zM402,286v3h1v-3zM403,288v6h1v-6zM404,286v8h1v-8zM405,286v3h1v-3zM406,287v2h1v-2zM407,286v2h1v-2zM408,286v2h1v-2zM409,286v2h1v-2zM410,286v2h1v-2zM411,286v2h1v-2zM412,286v2h1v-2zM413,286v3h1v-3zM414,287v2h1v-2zM415,287v3h1v-3zM416,286v4h1v-4zM417,286v4h1v-4zM418,289v2h1v-2zM419,288v2h1v-2zM420,283v6h1v-6zM421,283v6h1v-6zM422,288v2h1v-2zM423,288v2h1v-2zM424,286v4h1v-4zM425,286v3h1v-3zM426,286v3h1v-3zM427,285v2h1v-2zM428,285v3h1v-3zM429,282v6h1v-6zM430,282v6h1v-6zM431,287v2h1v-2zM432,287v2h1v-2zM433,286v3h1v-3zM434,286v2h1v-2zM435,286v3h1v-3zM436,285v4h1v-4zM437,285v2h1v-2zM438,285v2h1v-2zM439,285v3h1v-3zM440,282v6h1v-6zM441,282v5h1v-5zM442,283v4h1v-4zM443,283v4h1v-4zM444,285v2h1v-2zM445,282v4h1v-4zM446,282v5h1v-5zM447,286v2h1v-2zM448,285v3h1v-3zM449,285v5h1v-5zM450,285v5h1v-5zM451,284v2h1v-2zM452,284v3h1v-3zM453,286v2h1v-2zM454,284v3h1v-3zM455,284v2h1v-2zM456,285v2h1v-2zM457,284v2h1v-2zM458,284v2h1v-2zM459,284v2h1v-2zM460,285v2h1v-2zM461,282v4h1v-4zM462,282v4h1v-4zM463,284v2h1v-2zM464,284v2h1v-2zM465,279v7h1v-7zM466,279v4h1v-4zM467,282v2h1v-2zM468,282v3h1v-3zM469,284v2h1v-2zM470,284v2h1v-2zM471,284v2h1v-2zM472,284v2h1v-2zM473,284v2h1v-2zM474,284v2h1v-2zM475,285v4h1v-4zM476,283v6h1v-6zM477,283v2h1v-2zM478,282v3h1v-3zM479,282v3h1v-3zM480,284v2h1v-2zM481,282v3h1v-3zM482,282v4h1v-4zM483,285v2h1v-2zM484,282v4h1v-4zM485,282v2h1v-2zM486,281v3h1v-3zM487,281v4h1v-4zM488,283v2h1v-2zM489,281v3h1v-3zM490,281v3h1v-3zM491,281v3h1v-3zM492,281v2h1v-2zM493,282v3h1v-3zM494,281v4h1v-4zM495,281v4h1v-4zM496,284v2h1v-2zM497,281v4h1v-4zM498,281v2h1v-2zM499,281v4h1v-4zM500,282v3h1v-3zM501,282v2h1v-2zM502,280v4h1v-4zM503,280v2h1v-2zM504,280v2h1v-2zM505,280v2h1v-2zM506,279v3h1v-3zM507,279v2h1v-2zM508,277v4h1v-4zM509,277v4h1v-4zM510,278v3h1v-3zM511,278v2h1v-2zM512,278v3h1v-3zM513,279v2h1v-2zM514,279v3h1v-3zM515,281v2h1v-2zM516,281v2h1v-2z" fill="#ff00ff"/><rect x="516" y="223" width="1" height="58" fill="#c0c0c0"/></svg>

<!-- PI Errors group -->
<div class="grp" style="left:18px;top:374px;width:170px;height:63px;"></div>
<div class="gt" style="left:27px;top:368px;width:63px;"></div>
<div class="sq" style="left:28px;top:371px;background:#00ffff;"></div>
<!-- PI Failures group -->
<div class="grp" style="left:198px;top:374px;width:170px;height:63px;"></div>
<div class="gt" style="left:207px;top:368px;width:73px;"></div>
<div class="sq" style="left:208px;top:371px;background:#ffff00;"></div>
<!-- Jitter group -->
<div class="grp" style="left:379px;top:374px;width:171px;height:47px;"></div>
<div class="gt" style="left:388px;top:368px;width:40px;"></div>
<div class="sq" style="left:389px;top:371px;background:#ff00ff;"></div>

<!-- right panel -->
<div class="btn" style="left:562px;top:59px;width:68px;height:19px;"></div>
<div class="btn" style="left:654px;top:59px;width:68px;height:19px;"></div>
<div class="box" style="left:656px;top:60px;width:65px;height:16px;border:1px dotted #000;border-top-color:#a00000;border-bottom-color:#808000;"></div>

<div class="grpr" style="left:561px;top:88px;width:162px;height:69px;"></div>
<div class="gt" style="left:568px;top:82px;width:61px;"></div>

<div class="grpr" style="left:561px;top:161px;width:162px;height:179px;"></div>
<div class="gt" style="left:568px;top:155px;width:46px;"></div>
<div class="edit" style="left:631px;top:170px;width:82px;height:20px;"></div>
<div class="box" style="left:696px;top:171px;width:16px;height:18px;background:#c0c0c0;border:1px solid #808080;border-top-color:#fff;border-left-color:#fff;"></div>
<svg class="abs" style="left:699px;top:176px" width="10" height="8" viewBox="0 0 10 8"><path d="M1,1.5 L5,6 L9,1.5" stroke="#000" stroke-width="2" fill="none"/></svg>
<div class="edit" style="left:631px;top:194px;width:70px;height:18px;"></div>
<div class="edit" style="left:631px;top:217px;width:70px;height:18px;"></div>

<div class="cb" style="left:569px;top:242px;"></div>
<div class="cb" style="left:569px;top:261px;"></div>
<svg class="abs" style="left:569px;top:261px" width="13" height="13" viewBox="0 0 13 13"><path d="M3,6.2 L5.5,9 L10,3.8" stroke="#008000" stroke-width="2.4" fill="none"/></svg>
<div class="cb" style="left:569px;top:276px;"></div>
<svg class="abs" style="left:569px;top:276px" width="13" height="13" viewBox="0 0 13 13"><path d="M3,6.2 L5.5,9 L10,3.8" stroke="#008000" stroke-width="2.4" fill="none"/></svg>
<div class="cb" style="left:569px;top:291px;"></div>
<svg class="abs" style="left:569px;top:291px" width="13" height="13" viewBox="0 0 13 13"><path d="M3,6.2 L5.5,9 L10,3.8" stroke="#008000" stroke-width="2.4" fill="none"/></svg>
<div class="cb" style="left:569px;top:306px;"></div>
<svg class="abs" style="left:569px;top:306px" width="13" height="13" viewBox="0 0 13 13"><path d="M3,6.2 L5.5,9 L10,3.8" stroke="#008000" stroke-width="2.4" fill="none"/></svg>
<div class="cb" style="left:569px;top:321px;"></div>
<svg class="abs" style="left:569px;top:321px" width="13" height="13" viewBox="0 0 13 13"><path d="M3,6.2 L5.5,9 L10,3.8" stroke="#008000" stroke-width="2.4" fill="none"/></svg>

<div class="grpr" style="left:561px;top:344px;width:162px;height:24px;"></div>
<div class="grpr" style="left:561px;top:374px;width:162px;height:63px;"></div>

<div class="t tb" style="left:6.2px;top:9px"><span style="display:inline-block;width:195.6px;letter-spacing:0.99px">CD Speed : Disc Quality Test </span><span style="display:inline-block;width:14.1px;transform:scaleX(2.250);transform-origin:0 0">- </span><span style="display:inline-block;width:56.2px;letter-spacing:-0.02px">BENQ </span><span style="display:inline-block;width:127.2px;letter-spacing:0.81px">DVD DD DW1620 </span><span style="display:inline-block;width:34.3px;letter-spacing:0.76px">B7V9</span></div>
<div class="t " style="left:22.1px;top:37.0px;transform:scaleX(1.017)">Disc Quality</div>
<div class="t " style="left:292.7px;top:57.0px;transform:scaleX(1.011)">recorded with TEAC</div>
<div class="t " style="left:413.3px;top:57.0px;transform:scaleX(0.963)">DV-W516E</div>
<div class="t " style="left:504.5px;top:57.0px;transform:scaleX(0.917)">v1.07</div>
<div class="t " style="left:39.9px;top:368.0px;transform:scaleX(0.983)">PI Errors</div>
<div class="t " style="left:219.9px;top:368.0px;transform:scaleX(0.997)">PI Failures</div>
<div class="t " style="left:401.2px;top:368.0px;transform:scaleX(1.067)">Jitter</div>
<div class="t j" style="left:26.5px;top:382.0px;transform:scaleX(0.969)">平均:</div>
<div class="t j" style="left:26.5px;top:400.0px;transform:scaleX(0.969)">最大:</div>
<div class="t j" style="left:26.5px;top:418.0px;transform:scaleX(0.994)">合計 :</div>
<div class="t j" style="left:207.8px;top:382.0px;transform:scaleX(0.969)">平均:</div>
<div class="t j" style="left:207.8px;top:400.0px;transform:scaleX(0.969)">最大:</div>
<div class="t j" style="left:207.8px;top:418.0px;transform:scaleX(0.994)">合計 :</div>
<div class="t j" style="left:388.5px;top:382.0px;transform:scaleX(0.969)">平均:</div>
<div class="t j" style="left:388.5px;top:400.0px;transform:scaleX(0.969)">最大:</div>
<div class="t " style="left:389.1px;top:423.0px;transform:scaleX(0.964)">PO Failures:</div>
<div class="t v" style="left:148.9px;top:382.0px;transform:scaleX(0.942)">12.05</div>
<div class="t v" style="left:163.1px;top:400.0px;transform:scaleX(1.008)">45</div>
<div class="t v" style="left:139.5px;top:418.0px;transform:scaleX(0.951)">156060</div>
<div class="t v" style="left:336.1px;top:382.0px;transform:scaleX(0.956)">1.73</div>
<div class="t v" style="left:344.5px;top:400.0px;transform:scaleX(1.016)">18</div>
<div class="t v" style="left:326.8px;top:418.0px;transform:scaleX(0.960)">13834</div>
<div class="t v" style="left:507.0px;top:382.0px;transform:scaleX(0.885)">9.27 %</div>
<div class="t v" style="left:507.0px;top:400.0px;transform:scaleX(0.885)">12.1 %</div>
<div class="t v" style="left:531.0px;top:423.0px;transform:scaleX(1.015)">0</div>
<div class="t j" style="left:582.9px;top:61.0px;transform:scaleX(1.025)">開始</div>
<div class="t j" style="left:667.1px;top:61.0px;transform:scaleX(0.995)">終了(<u>X</u>)</div>
<div class="t b j" style="left:569.5px;top:80px"><span style="display:inline-block;width:34.8px;transform:scaleX(0.746);transform-origin:0 0">ディスク</span><span style="display:inline-block;width:25.7px;transform:scaleX(0.988);transform-origin:0 0">情報</span></div>
<div class="t j" style="left:568.5px;top:94.0px;transform:scaleX(0.732)">タイプ:</div>
<div class="t " style="left:568.5px;top:109.0px;transform:scaleX(0.918)">ID:</div>
<div class="t j" style="left:568.5px;top:124.0px;transform:scaleX(0.951)">日付:</div>
<div class="t " style="left:568.8px;top:139.0px;transform:scaleX(0.948)">Label:</div>
<div class="t v" style="left:616.3px;top:94.0px;transform:scaleX(1.071)">DVD-R</div>
<div class="t v" style="left:616.3px;top:109.0px;transform:scaleX(0.931)">RITEKG04</div>
<div class="t v" style="left:616.3px;top:124.0px;transform:scaleX(1.007)">22 July 2005</div>
<div class="t v" style="left:616.3px;top:139.0px;transform:scaleX(0.909)">CDS_TEST_B2</div>
<div class="t b" style="left:569.5px;top:154.0px;transform:scaleX(1.023)">Settings</div>
<div class="t j" style="left:568.2px;top:172.0px;transform:scaleX(0.996)">転送速度</div>
<div class="t j" style="left:568.2px;top:197.0px;transform:scaleX(0.987)">開始</div>
<div class="t j" style="left:568.2px;top:221.0px;transform:scaleX(0.996)">終了位置</div>
<div class="t " style="left:634.5px;top:172.0px;transform:scaleX(1.100)">4 X</div>
<div class="t " style="left:632.9px;top:196.0px;transform:scaleX(0.986)">0000 MB</div>
<div class="t " style="left:632.9px;top:219.0px;transform:scaleX(0.986)">4489 MB</div>
<div class="t " style="left:584.3px;top:241.0px;transform:scaleX(0.993)">Quick Scan</div>
<div class="t " style="left:584.3px;top:260.0px;transform:scaleX(0.997)">Show C1/PIE</div>
<div class="t " style="left:584.3px;top:275.0px;transform:scaleX(1.007)">Show C2/PIF</div>
<div class="t " style="left:584.3px;top:290.0px;transform:scaleX(1.041)">Show Jitter</div>
<div class="t " style="left:584.3px;top:305.0px;transform:scaleX(0.958)">Show Read Speed</div>
<div class="t " style="left:584.3px;top:320.0px;transform:scaleX(0.967)">Show Write Speed</div>
<div class="t j" style="left:568.1px;top:349px"><span style="display:inline-block;width:24.0px;transform:scaleX(1.042);transform-origin:0 0">品質</span><span style="display:inline-block;width:30.7px;transform:scaleX(0.729);transform-origin:0 0">スコア:</span></div>
<div class="t v" style="left:694.0px;top:349.0px;transform:scaleX(1.008)">85</div>
<div class="t j" style="left:568.1px;top:380.0px;transform:scaleX(0.989)">進行状況:</div>
<div class="t j" style="left:568.1px;top:400.0px;transform:scaleX(0.748)">ポジション:</div>
<div class="t j" style="left:568.1px;top:417.0px;transform:scaleX(0.984)">速度:</div>
<div class="t v" style="left:678.1px;top:380.0px;transform:scaleX(0.923)">100 %</div>
<div class="t v" style="left:660.8px;top:400.0px;transform:scaleX(1.001)">4488 MB</div>
<div class="t v" style="left:676.2px;top:417.0px;transform:scaleX(0.980)">4.20 X</div>
<div class="t " style="left:42.3px;top:66.0px;transform:scaleX(0.961)">50</div>
<div class="t " style="left:42.3px;top:93.0px;transform:scaleX(0.961)">40</div>
<div class="t " style="left:42.3px;top:119.0px;transform:scaleX(0.961)">30</div>
<div class="t " style="left:42.3px;top:145.0px;transform:scaleX(0.961)">20</div>
<div class="t " style="left:42.3px;top:171.0px;transform:scaleX(0.961)">10</div>
<div class="t " style="left:532.4px;top:66.0px;transform:scaleX(0.914)">16</div>
<div class="t " style="left:532.4px;top:83.0px;transform:scaleX(0.914)">14</div>
<div class="t " style="left:532.4px;top:99.0px;transform:scaleX(0.914)">12</div>
<div class="t " style="left:532.4px;top:115.0px;transform:scaleX(0.914)">10</div>
<div class="t " style="left:532.4px;top:132.0px;transform:scaleX(0.968)">8</div>
<div class="t " style="left:532.4px;top:148.0px;transform:scaleX(0.968)">6</div>
<div class="t " style="left:532.4px;top:164.0px;transform:scaleX(0.968)">4</div>
<div class="t " style="left:532.4px;top:181.0px;transform:scaleX(0.968)">2</div>
<div class="t " style="left:42.3px;top:216.0px;transform:scaleX(0.961)">20</div>
<div class="t " style="left:532.4px;top:216.0px;transform:scaleX(0.914)">20</div>
<div class="t " style="left:42.3px;top:243.0px;transform:scaleX(0.961)">16</div>
<div class="t " style="left:532.4px;top:243.0px;transform:scaleX(0.914)">16</div>
<div class="t " style="left:42.3px;top:269.0px;transform:scaleX(0.961)">12</div>
<div class="t " style="left:532.4px;top:269.0px;transform:scaleX(0.914)">12</div>
<div class="t " style="left:47.8px;top:295.0px;transform:scaleX(1.061)">8</div>
<div class="t " style="left:532.4px;top:295.0px;transform:scaleX(0.968)">8</div>
<div class="t " style="left:47.8px;top:321.0px;transform:scaleX(1.061)">4</div>
<div class="t " style="left:532.4px;top:321.0px;transform:scaleX(0.968)">4</div>
<div class="t " style="left:56.7px;top:206.0px;transform:scaleX(0.875)">0.0</div>
<div class="t " style="left:56.7px;top:356.0px;transform:scaleX(0.875)">0.0</div>
<div class="t " style="left:107.4px;top:206.0px;transform:scaleX(0.875)">0.5</div>
<div class="t " style="left:107.4px;top:356.0px;transform:scaleX(0.875)">0.5</div>
<div class="t " style="left:158.5px;top:206.0px;transform:scaleX(0.875)">1.0</div>
<div class="t " style="left:158.5px;top:356.0px;transform:scaleX(0.875)">1.0</div>
<div class="t " style="left:211.5px;top:206.0px;transform:scaleX(0.875)">1.5</div>
<div class="t " style="left:211.5px;top:356.0px;transform:scaleX(0.875)">1.5</div>
<div class="t " style="left:263.2px;top:206.0px;transform:scaleX(0.875)">2.0</div>
<div class="t " style="left:263.2px;top:356.0px;transform:scaleX(0.875)">2.0</div>
<div class="t " style="left:315.0px;top:206.0px;transform:scaleX(0.875)">2.5</div>
<div class="t " style="left:315.0px;top:356.0px;transform:scaleX(0.875)">2.5</div>
<div class="t " style="left:367.0px;top:206.0px;transform:scaleX(0.875)">3.0</div>
<div class="t " style="left:367.0px;top:356.0px;transform:scaleX(0.875)">3.0</div>
<div class="t " style="left:419.5px;top:206.0px;transform:scaleX(0.875)">3.5</div>
<div class="t " style="left:419.5px;top:356.0px;transform:scaleX(0.875)">3.5</div>
<div class="t " style="left:471.4px;top:206.0px;transform:scaleX(0.875)">4.0</div>
<div class="t " style="left:471.4px;top:356.0px;transform:scaleX(0.875)">4.0</div>
<div class="t " style="left:523.4px;top:206.0px;transform:scaleX(0.875)">4.5</div>
<div class="t " style="left:523.4px;top:356.0px;transform:scaleX(0.875)">4.5</div>
</body>
</html>
